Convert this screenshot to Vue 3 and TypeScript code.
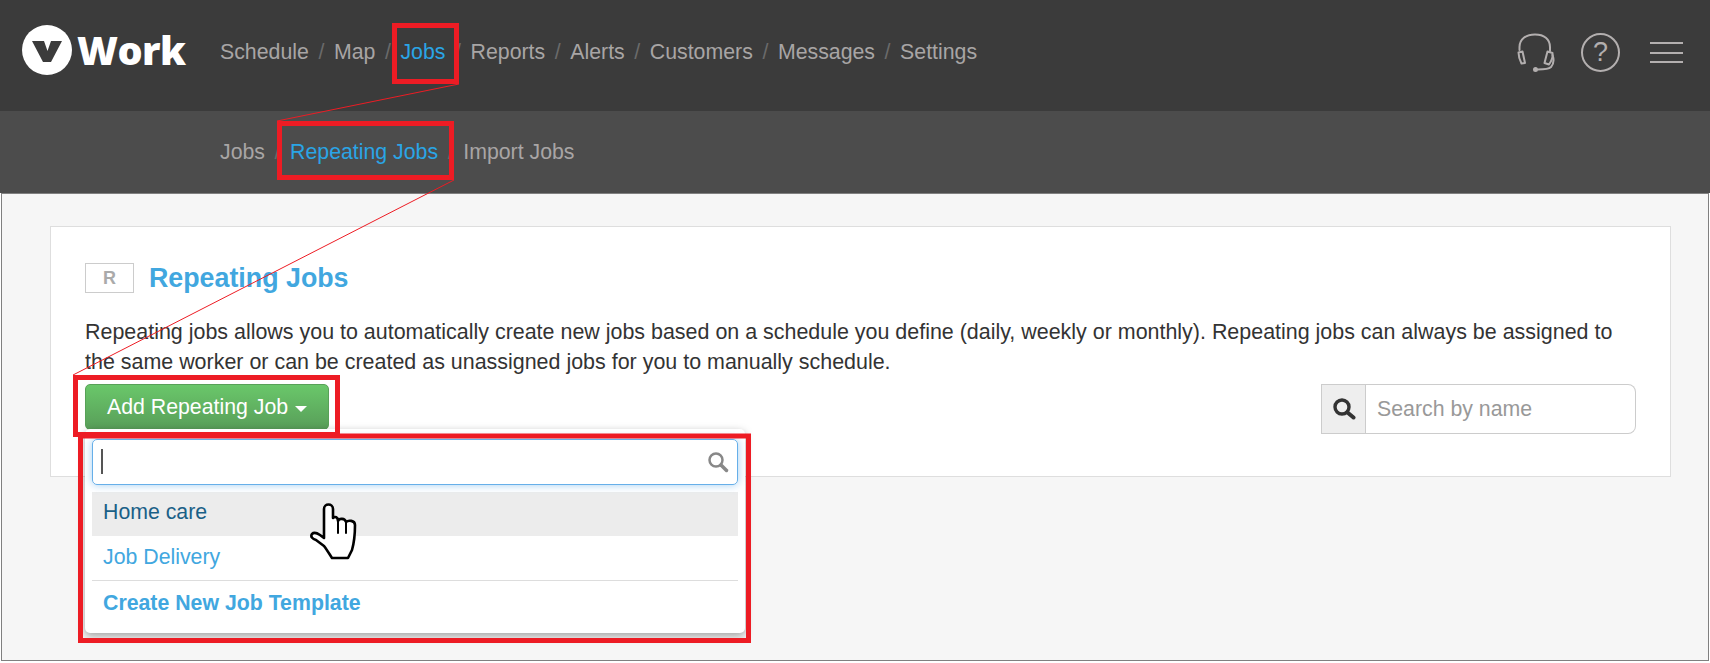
<script setup lang="ts">
import { ref } from 'vue'

interface NavLink {
  label: string
  active?: boolean
}

const mainLinks = ref<NavLink[]>([
  { label: 'Schedule' },
  { label: 'Map' },
  { label: 'Jobs', active: true },
  { label: 'Reports' },
  { label: 'Alerts' },
  { label: 'Customers' },
  { label: 'Messages' },
  { label: 'Settings' },
])

const subLinks = ref<NavLink[]>([
  { label: 'Jobs' },
  { label: 'Repeating Jobs', active: true },
  { label: 'Import Jobs' },
])

// Red annotation boxes drawn on the screenshot: x, y, width, height
const redBoxes = [
  [394.5, 25.5, 62, 56],
  [279.5, 123.5, 172, 54],
  [75.5, 377.5, 262, 57],
  [80.5, 436, 668, 204.5],
]
</script>

<template>
  <div class="page">
    <header class="topbar">
      <div class="logo">
        <svg class="logo-mark" width="50" height="50" viewBox="0 0 50 50">
          <circle cx="25" cy="25" r="25" fill="#fff" />
          <path d="M10 16h12l3.500 10 3.500-10h11L29 37h-8z" fill="#3b3b3b" />
        </svg>
        <span class="logo-text">Work</span>
      </div>
      <nav class="nav">
        <template v-for="(link, i) in mainLinks" :key="link.label">
          <span v-if="i" class="slash">/</span>
          <a :class="{ active: link.active }">{{ link.label }}</a>
        </template>
      </nav>
      <div class="top-icons">
        <svg width="38" height="40" viewBox="0 0 38 40" fill="none" stroke="#b3afaf" stroke-width="2" stroke-linecap="round" stroke-linejoin="round">
          <path d="M2.500 17V14C2.500 6 9 1.500 18 1.500S33 6 33 14v4" />
          <path d="M1.500 19.500l4-1 2.500 11.500-3.500.5c-1.500-3-3-7-3-11z" />
          <path d="M30.500 18.500l5 1.500c.5 3-1 8-3.500 11.500l-4.500-1.500z" />
          <path d="M35.500 22c1.500 4 1 9-1.500 12-2 2-7 2.500-13 2.500" />
          <circle cx="18.500" cy="36.500" r="1.500" fill="#b3afaf" />
        </svg>
        <div class="help">?</div>
        <div class="burger"><i></i><i></i><i></i></div>
      </div>
    </header>

    <div class="subbar">
      <nav class="nav">
        <template v-for="(link, i) in subLinks" :key="link.label">
          <span v-if="i" class="slash">/</span>
          <a :class="{ active: link.active }">{{ link.label }}</a>
        </template>
      </nav>
    </div>

    <main class="frame">
      <section class="card">
        <div class="heading">
          <span class="badge">R</span>
          <h1>Repeating Jobs</h1>
        </div>
        <p class="intro">
          Repeating jobs allows you to automatically create new jobs based on a schedule you define (daily, weekly or monthly). Repeating jobs can always be assigned to the same worker or can be created as unassigned jobs for you to manually schedule.
        </p>
        <div class="toolbar">
          <div class="add-wrap">
            <button class="add-btn">Add Repeating Job <span class="caret"></span></button>
            <div class="menu">
              <div class="menu-search">
                <input type="text" />
                <span class="text-cursor"></span>
                <svg width="22" height="22" viewBox="0 0 22 22" fill="none" stroke="#888" stroke-linecap="round">
                  <circle cx="9" cy="9" r="6.500" stroke-width="2.500" />
                  <path d="M14 14l5.500 5.500" stroke-width="3.500" />
                </svg>
              </div>
              <a class="item hover">Home care</a>
              <a class="item">Job Delivery</a>
              <a class="item create">Create New Job Template</a>
            </div>
          </div>
          <div class="search">
            <span class="search-addon">
              <svg width="24" height="24" viewBox="0 0 24 24" fill="none" stroke="#333" stroke-linecap="round">
                <circle cx="10" cy="10" r="7" stroke-width="3.400" />
                <path d="M15.500 15.500l6 5" stroke-width="4" />
              </svg>
            </span>
            <input type="text" placeholder="Search by name" />
          </div>
        </div>
      </section>
    </main>

    <!-- Annotations on top of the screenshot -->
    <svg class="annotations" width="1710" height="663" viewBox="0 0 1710 663" fill="none">
      <path d="M459 84L277 121M454 180L73 375" stroke="#ed1c24" stroke-width="1" />
      <rect
        v-for="(box, i) in redBoxes"
        :key="i"
        :x="box[0]"
        :y="box[1]"
        :width="box[2]"
        :height="box[3]"
        stroke="#ed1c24"
        stroke-width="5"
      />
      <g transform="translate(280 490)" stroke="#000" stroke-width="2.600" stroke-linejoin="round" stroke-linecap="round">
        <path fill="#fff" d="M44 19c0-6 9-6 9 0v9c2-2 5-1 5 3 1-3 7-3 8 1 2-2 9-2 9 3 0 8-1 18-3 25l-4 8H52c-2-3-5-8-8-12l-8-6c-3-1-6-3-4-6 2-2 5-1 8 1l4 3z" />
        <path d="M58 31v12M66 33v10" stroke-width="2" />
      </g>
    </svg>
  </div>
</template>

<style>
html,
body {
  margin: 0;
  background: #fff;
  overflow: hidden;
}
</style>

<style scoped>
.page {
  position: relative;
  width: 1710px;
  height: 663px;
  font-family: "Liberation Sans", Arial, sans-serif;
  overflow: hidden;
}

.topbar {
  display: flex;
  align-items: center;
  height: 111px;
  background: #3b3b3b;
  padding-left: 22px;
  box-sizing: border-box;
}

.logo {
  display: flex;
  align-items: center;
  width: 198px;
  margin-top: -11px;
}

.logo-text {
  margin-left: 5px;
  color: #fff;
  font-family: "Open Sans", Lato, sans-serif;
  font-size: 39.500px;
  font-weight: 800;
  letter-spacing: -0.6px;
  line-height: 50px;
}

.nav {
  display: flex;
  align-items: center;
  font-size: 21.300px;
  color: #a8a5a5;
}

.topbar .nav {
  margin-top: -6px;
}

.nav .active {
  color: #2aa5e6;
}

.slash {
  margin: 0 9.600px;
  color: #6a6a6a;
}

.top-icons {
  display: flex;
  align-items: center;
  margin-top: -6px;
  margin-left: auto;
  margin-right: 27px;
}

.help {
  width: 35px;
  height: 35px;
  margin-left: 26px;
  border: 2px solid #b3afaf;
  border-radius: 50%;
  color: #b3afaf;
  font-size: 27px;
  line-height: 35px;
  text-align: center;
}

.burger {
  display: flex;
  flex-direction: column;
  gap: 7.500px;
  width: 33px;
  margin-left: 30px;
}

.burger i {
  height: 2px;
  background: #b3afaf;
}

.subbar {
  display: flex;
  align-items: center;
  height: 82px;
  padding-left: 220px;
  box-sizing: border-box;
  background: #4c4c4c;
}

.frame {
  width: 1708px;
  height: 468px;
  margin-left: 1px;
  padding: 32px 37px 0 48px;
  box-sizing: border-box;
  border: 1px solid #808080;
  background: #f6f6f6;
}

.card {
  height: 251px;
  padding: 35px 34px 0;
  box-sizing: border-box;
  background: #fff;
  border: 1px solid #dedede;
}

.heading {
  display: flex;
  align-items: center;
  gap: 15px;
}

.badge {
  width: 49px;
  height: 30px;
  box-sizing: border-box;
  border: 1px solid #ccc;
  color: #aaa;
  font-size: 18px;
  font-weight: 700;
  line-height: 28px;
  text-align: center;
}

h1 {
  margin: 1px 0 0;
  color: #41a7df;
  font-size: 26.800px;
  font-weight: 700;
  line-height: 30px;
}

.intro {
  margin: 24px 0 0;
  color: #333;
  font-size: 21.450px;
  line-height: 30px;
}

.toolbar {
  display: flex;
  justify-content: space-between;
  margin-top: 7px;
}

.add-wrap {
  position: relative;
}

.add-btn {
  display: block;
  width: 244px;
  height: 46px;
  padding: 0;
  border: 1px solid #58a158;
  border-radius: 5px;
  background: linear-gradient(#6ac76a, #589e59);
  color: #fff;
  font-family: inherit;
  font-size: 21.300px;
}

.caret {
  display: inline-block;
  margin-left: 1px;
  vertical-align: 2px;
  border-top: 6px solid #fff;
  border-left: 6.500px solid transparent;
  border-right: 6.500px solid transparent;
}

.menu {
  position: absolute;
  top: 45px;
  left: 0;
  z-index: 2;
  width: 660px;
  height: 204px;
  padding: 10px 7px 0;
  box-sizing: border-box;
  border-radius: 5px;
  background: #fff;
  box-shadow: 0 3px 8px rgba(0, 0, 0, 0.35);
}

.menu-search {
  position: relative;
  display: flex;
  align-items: center;
  justify-content: flex-end;
  height: 46px;
  margin-bottom: 7px;
  padding-right: 8px;
  box-sizing: border-box;
  border: 1px solid #66afe9;
  border-radius: 5px;
  box-shadow: 0 0 8px rgba(102, 175, 233, 0.6);
}

.menu-search input {
  position: absolute;
  inset: 0;
  width: 100%;
  border: 0;
  background: transparent;
  outline: none;
}

.text-cursor {
  position: absolute;
  left: 8px;
  top: 9px;
  width: 2px;
  height: 25px;
  background: #555;
}

.menu-search svg {
  position: relative;
}

.item {
  display: block;
  height: 44px;
  padding-left: 11px;
  color: #41a7df;
  font-size: 21.300px;
  line-height: 43px;
}

.item.hover {
  background: #ececec;
  color: #1a6087;
  line-height: 40px;
}

.item.create {
  height: 46px;
  border-top: 1px solid #ddd;
  font-weight: 700;
  line-height: 44px;
}

.search {
  display: flex;
  width: 315px;
  height: 50px;
}

.search-addon {
  display: flex;
  align-items: center;
  justify-content: center;
  width: 45px;
  box-sizing: border-box;
  border: 1px solid #ccc;
  background: #eee;
}

.search input {
  flex: 1;
  min-width: 0;
  padding: 0 11px;
  box-sizing: border-box;
  border: 1px solid #ccc;
  border-left: 0;
  border-radius: 0 8px 8px 0;
  font-family: inherit;
  font-size: 21.300px;
  outline: none;
}

.search input::placeholder {
  color: #999;
}

.annotations {
  position: absolute;
  top: 0;
  left: 0;
  z-index: 3;
  pointer-events: none;
}
</style>
